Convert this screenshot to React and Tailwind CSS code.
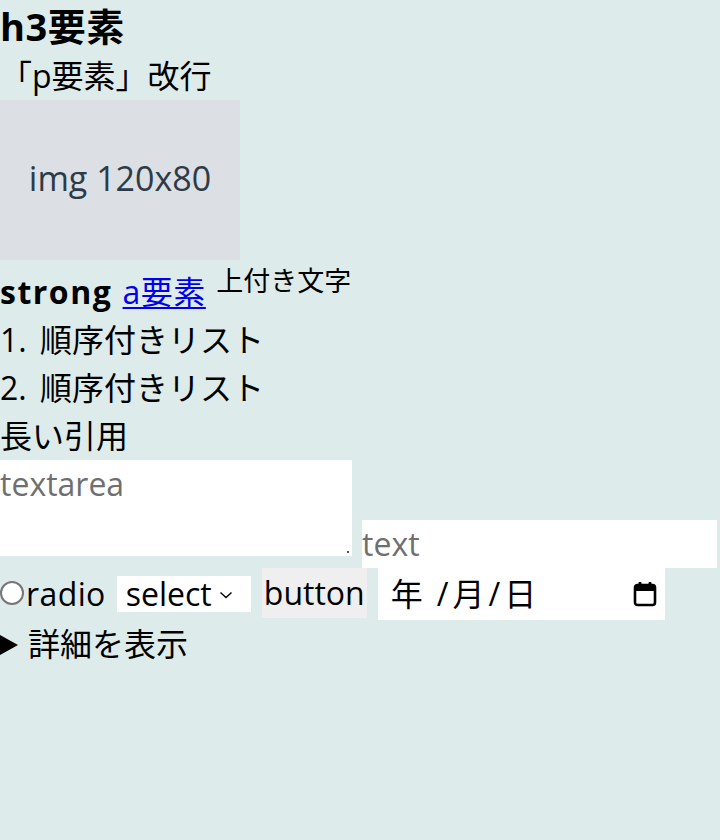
import React from 'react';

const font = 'font-["Open_Sans","Noto_Sans_CJK_JP",sans-serif]';

const CalendarIcon = () => (
  <svg width="26" height="28" viewBox="0 0 26 28" fill="none">
    <rect x="3" y="5" width="20" height="20" rx="2.5" stroke="#000" strokeWidth="2.6" />
    <rect x="3" y="5" width="20" height="6" fill="#000" />
    <rect x="6.5" y="2" width="3" height="5" rx="1" fill="#000" />
    <rect x="16.5" y="2" width="3" height="5" rx="1" fill="#000" />
  </svg>
);

const App = () => {
  return (
    <div className={`${font} min-h-[840px] w-[720px] bg-[#deebeb] text-[32px] leading-[48px] text-black`}>
      <h3 className="text-[38px] font-bold leading-[52px] tracking-[0.5px]">h3要素</h3>
      <p>「p要素」改行</p>

      {/* image placeholder */}
      <div className="flex h-[160px] w-[240px] items-center justify-center bg-[#dcdfe3] pb-[4px] text-[34px] text-[#2d3b48]">
        img 120x80
      </div>

      <div className="pt-[8px]">
        <strong className="font-bold tracking-[1.5px]">strong</strong>{' '}
        <a href="#" className="ml-[2px] tracking-[0.5px] text-[#0000ee] underline decoration-[2px] underline-offset-[3px]">a要素</a>{' '}
        <sup className="ml-[2px] text-[27px]">上付き文字</sup>
      </div>

      <ol>
        <li className="flex"><span className="w-[40px]">1.</span>順序付きリスト</li>
        <li className="flex"><span className="w-[40px]">2.</span>順序付きリスト</li>
      </ol>

      <blockquote>長い引用</blockquote>

      <div className="flex items-start gap-[10px]">
        <div className="relative">
          <textarea
            rows={2}
            placeholder="textarea"
            className="block h-[96px] w-[352px] resize-none bg-white leading-[48px] text-[32px] outline-none placeholder:text-[#6f6f6f]"
          />
          <span className="absolute bottom-[3px] right-[3px] h-[2px] w-[2px] bg-[#555]" />
        </div>
        <input
          type="text"
          placeholder="text"
          className="mt-[60px] h-[48px] w-[355px] bg-white text-[32px] outline-none placeholder:text-[#6f6f6f]"
        />
      </div>

      <div className="flex h-[52px] items-start">
        <span className="mt-[13px] h-[24px] w-[24px] shrink-0 rounded-full border-[2px] border-[#767676] bg-white" />
        <span className="ml-[2px] mt-[2px] tracking-[0.4px]">radio</span>
        <div className="ml-[11px] mt-[8px] flex h-[36px] w-[134px] items-center bg-white pl-[9px] leading-[36px]">
          <span>select</span>
          <svg width="14" height="10" viewBox="0 0 14 10" className="ml-[7px] mt-[2px]">
            <path d="M1.5 2.5 L7 7.5 L12.5 2.5" stroke="#000" strokeWidth="1.4" fill="none" />
          </svg>
        </div>
        <button className="ml-[11px] h-[50px] w-[105px] bg-[#efefef] leading-[48px]">button</button>
        <div className="ml-[11px] flex h-[52px] w-[287px] items-center bg-white pl-[13px] pr-[7px]">
          <span className="flex flex-1 items-center">
            <span>年</span>
            <span className="ml-[14px]">/</span>
            <span className="ml-[4px]">月</span>
            <span className="ml-[4px]">/</span>
            <span className="ml-[4px]">日</span>
          </span>
          <CalendarIcon />
        </div>
      </div>

      <details>
        <summary className="flex list-none items-center">
          <svg width="18" height="22" viewBox="0 0 18 22" className="mr-[10px] mt-[2px]">
            <path d="M0 1 L18 11 L0 21 Z" fill="#000" />
          </svg>
          詳細を表示
        </summary>
      </details>
    </div>
  );
};

export default App;
